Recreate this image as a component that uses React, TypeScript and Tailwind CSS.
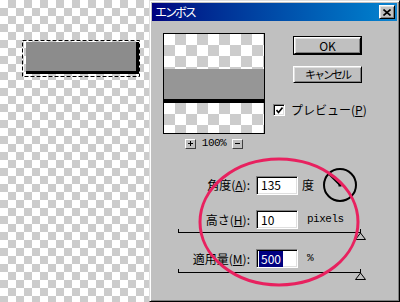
import React from 'react';

const raised =
  'border border-t-white border-l-white border-r-black border-b-black shadow-[inset_1px_1px_0_#dfdfdf,inset_-1px_-1px_0_#808080] bg-[#c0c0c0]';
const sunken =
  'border border-t-[#808080] border-l-[#808080] border-r-white border-b-white shadow-[inset_1px_1px_0_#000000,inset_-1px_-1px_0_#dfdfdf] bg-white';

const Selection: React.FC = () => (
  <svg width="120" height="38" className="block">
    <rect x="5" y="3" width="110" height="29" fill="#8c8c8c" />
    <rect x="115" y="3" width="3" height="32" fill="#000" />
    <rect x="5" y="32" width="113" height="3" fill="#000" />
    <rect x="1.5" y="1.5" width="117" height="36" fill="none" stroke="#fff" />
    <rect x="1.5" y="1.5" width="117" height="36" fill="none" stroke="#000" strokeDasharray="4 2" />
  </svg>
);

const MiniBtn: React.FC<{ plus?: boolean }> = ({ plus }) => (
  <div className="w-[11px] h-[10px] flex items-center justify-center bg-[#c0c0c0] border border-t-white border-l-white border-r-[#404040] border-b-[#404040]">
    <svg width="5" height="5" className="block">
      <path d={plus ? 'M0 2.5 H5 M2.5 0 V5' : 'M0 2.5 H5'} stroke="#000" />
    </svg>
  </div>
);

const Slider: React.FC<{ className?: string }> = ({ className }) => (
  <svg width="190" height="11" className={`block ml-[26px] ${className ?? ''}`}>
    <path d="M0.5 0 V4 M0.5 3.5 H182.5 M182.5 0 V4" stroke="#000" fill="none" />
    <path d="M182.5 4 L177.5 10.5 H187.5 Z" fill="#c0c0c0" stroke="#000" />
  </svg>
);

const Label: React.FC<{ text: string; k: string }> = ({ text, k }) => (
  <span className="w-[98px] text-right text-[12px] leading-none">
    {text}(<span className="underline">{k}</span>):
  </span>
);

const App: React.FC = () => {
  return (
    <div className="relative flex w-[400px] h-[302px] overflow-hidden bg-white text-black font-['Noto_Sans_CJK_JP',sans-serif]">
      {/* canvas */}
      <div className="w-[149px] h-full shrink-0 pl-[21px] pt-[39px] bg-[conic-gradient(#cccccc_25%,#ffffff_0_50%,#cccccc_0_75%,#ffffff_0)] bg-[length:16px_16px]">
        <Selection />
      </div>

      {/* dialog */}
      <div className="flex-1 flex flex-col h-full p-[2px] bg-[#c0c0c0] border border-t-[#dfdfdf] border-l-[#dfdfdf] border-r-black border-b-black shadow-[inset_1px_1px_0_#ffffff,inset_-1px_-1px_0_#808080]">
        <div className="h-[18px] flex items-center justify-between pl-[3px] pr-[2px] bg-linear-to-r from-[#000080] to-[#1084d0]">
          <span className="text-white text-[12px] tracking-[-2px] leading-none">エンボス</span>
          <div className={`w-[16px] h-[14px] flex items-center justify-center ${raised}`}>
            <svg width="8" height="7" className="block">
              <path d="M0.5 0.5 L7.5 6.5 M7.5 0.5 L0.5 6.5" stroke="#000" strokeWidth="1.6" />
            </svg>
          </div>
        </div>

        <div className="flex-1 flex flex-col">
          <div className="flex pl-[11px] pt-[12px]">
            <div className="flex flex-col items-center w-[102px]">
              <div className="w-[102px] h-[101px] border border-black flex flex-col">
                <div className="h-[35px] bg-[conic-gradient(#cccccc_25%,#ffffff_0_50%,#cccccc_0_75%,#ffffff_0)] bg-[length:22px_22px]" />
                <div className="h-[30px] bg-[#969696]" />
                <div className="h-[4px] bg-black" />
                <div className="flex-1 bg-[conic-gradient(#cccccc_25%,#ffffff_0_50%,#cccccc_0_75%,#ffffff_0)] bg-[length:22px_22px]" />
              </div>
              <div className="flex items-center mt-[5px] h-[9px] gap-[6px]">
                <MiniBtn plus />
                <span className="font-['Liberation_Mono',monospace] text-[11px] tracking-[-0.5px] leading-none">100%</span>
                <MiniBtn />
              </div>
            </div>

            <div className="flex flex-col ml-[8px]">
              <div className="ml-[20px] mt-[3px] border border-black w-[69px] h-[19px]">
                <div className={`w-full h-full flex items-center justify-center text-[12px] leading-none ${raised}`}>OK</div>
              </div>
              <div className={`ml-[20px] mt-[11px] w-[69px] h-[17px] flex items-center justify-center text-[11px] tracking-[-2px] leading-none ${raised}`}>
                キャンセル
              </div>
              <div className="flex items-center mt-[21px]">
                <div className={`w-[12px] h-[12px] flex items-center justify-center ${sunken}`}>
                  <svg width="7" height="7" className="block">
                    <path d="M0.5 3 L2.5 5.5 L6.5 0.5" stroke="#000" strokeWidth="1.6" fill="none" />
                  </svg>
                </div>
                <span className="ml-[6px] text-[12px] leading-none">
                  プレビュー(<span className="underline">P</span>)
                </span>
              </div>
            </div>
          </div>

          {/* angle */}
          <div className="flex items-center h-[34px] mt-[20px]">
            <Label text="角度" k="A" />
            <div className={`ml-[6px] w-[42px] h-[19px] flex items-center pl-[4px] text-[12px] leading-none ${sunken}`}>135</div>
            <span className="ml-[4px] text-[12px] leading-none">度</span>
            <svg width="34" height="34" className="block ml-[9px]">
              <circle cx="17" cy="17" r="16" fill="none" stroke="#000" strokeWidth="2" />
              <path d="M17 17 L6 6" stroke="#000" strokeWidth="2" />
              <rect x="15.5" y="15.5" width="3" height="3" fill="#000" />
            </svg>
          </div>

          {/* height */}
          <div className="flex items-center h-[19px] mt-[8px]">
            <Label text="高さ" k="H" />
            <div className={`ml-[6px] w-[42px] h-[19px] flex items-center pl-[4px] text-[12px] leading-none ${sunken}`}>10</div>
            <span className="ml-[9px] font-['Liberation_Mono',monospace] text-[11px] tracking-[-0.5px] leading-none">pixels</span>
          </div>
          <Slider />

          {/* amount */}
          <div className="flex items-center h-[19px] mt-[9px]">
            <Label text="適用量" k="M" />
            <div className={`ml-[6px] w-[42px] h-[19px] flex items-center pl-[2px] text-[12px] leading-none ${sunken}`}>
              <span className="bg-[#000080] text-white px-[2px] py-[2px]">500</span>
            </div>
            <span className="ml-[9px] font-['Liberation_Mono',monospace] text-[11px] leading-none">%</span>
          </div>
          <Slider className="mt-[1px]" />
        </div>
      </div>

      {/* annotation */}
      <svg className="pointer-events-none absolute inset-0" width="400" height="302">
        <ellipse cx="279" cy="222" rx="79" ry="63" fill="none" stroke="#e8215f" strokeWidth="3" />
      </svg>
    </div>
  );
};

export default App;
